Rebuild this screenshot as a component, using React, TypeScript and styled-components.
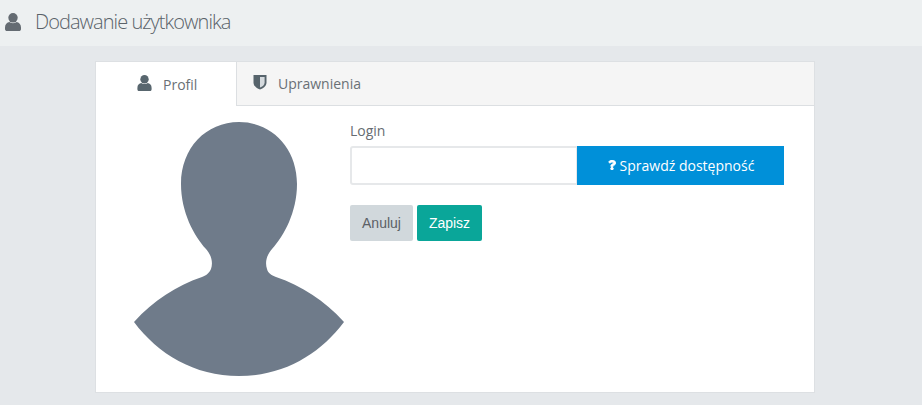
import styled, { createGlobalStyle } from 'styled-components';
import { FaQuestion } from 'react-icons/fa';

const GlobalStyle = createGlobalStyle`
  html, body {
    margin: 0;
    padding: 0;
    background: #e5e8eb;
    font-family: 'Open Sans', 'Liberation Sans', sans-serif;
  }
`;

const Page = styled.div`
  width: 922px;
  height: 405px;
  overflow: hidden;
`;

const Header = styled.header`
  height: 46px;
  background: #edf0f1;
  display: flex;
  align-items: center;
  padding-left: 5px;
  gap: 14px;
`;

const HeaderIcon = styled.svg`
  width: 16px;
  height: 18px;
  fill: #646b72;
  margin-bottom: 2px;
`;

const Title = styled.h1`
  margin: 0 0 3px;
  font-size: 20px;
  font-weight: 300;
  letter-spacing: -0.95px;
  color: #5a6269;
`;

const Card = styled.section`
  width: 720px;
  height: 332px;
  box-sizing: border-box;
  margin: 15px 0 0 95px;
  background: #fff;
  border: 1px solid #dde0e3;
  display: flex;
  flex-direction: column;
`;

const Tabs = styled.nav`
  height: 43px;
  flex: none;
  display: flex;
  background: #f5f5f5;
  border-bottom: 1px solid #dcdfe2;
`;

const Tab = styled.div<{ $active?: boolean }>`
  display: flex;
  align-items: center;
  box-sizing: border-box;
  height: ${(p) => (p.$active ? '44px' : '43px')};
  width: ${(p) => (p.$active ? '141px' : 'auto')};
  padding-left: ${(p) => (p.$active ? '41px' : '16px')};
  gap: 11px;
  font-size: 14px;
  color: #6a7075;
  background: ${(p) => (p.$active ? '#fff' : 'transparent')};
  border-right: ${(p) => (p.$active ? '1px solid #dcdfe2' : 'none')};
`;

const TabIcon = styled.span`
  display: flex;
  margin-top: -3px;
`;

const TabUser = styled.svg`
  width: 15px;
  height: 16px;
  fill: #58666e;
`;

const Body = styled.div`
  flex: 1;
  display: flex;
  padding: 16px 30px 0 38px;
`;

const Avatar = styled.svg`
  width: 210px;
  height: 254px;
  flex: none;
  fill: #6f7b8a;
`;

const Form = styled.form`
  flex: 1;
  margin-left: 6px;
`;

const Label = styled.label`
  display: block;
  font-size: 14px;
  line-height: 18px;
  color: #666c72;
`;

const InputRow = styled.div`
  display: flex;
  margin-top: 6px;
  height: 39px;
`;

const Input = styled.input`
  width: 227px;
  box-sizing: border-box;
  border: 2px solid #e6e8ea;
  border-right-width: 1px;
  border-radius: 3px 0 0 3px;
  background: #fff;
  outline: none;
`;

const CheckButton = styled.button`
  flex: 1;
  border: none;
  background: #0090d9;
  color: #fff;
  font-family: 'Open Sans', sans-serif;
  font-size: 14px;
  display: flex;
  align-items: center;
  justify-content: center;
  gap: 3px;
  padding: 0 0 1px;
`;

const QuestionIcon = styled(FaQuestion)`
  stroke: currentColor;
  stroke-width: 40px;
`;

const Actions = styled.div`
  display: flex;
  gap: 4px;
  margin-top: 20px;
`;

const ActionButton = styled.button<{ $primary?: boolean }>`
  height: 36px;
  width: ${(p) => (p.$primary ? '65px' : '63px')};
  border: none;
  border-radius: 2px;
  padding: 0;
  font-family: 'Liberation Sans', Arial, sans-serif;
  font-size: 14px;
  color: ${(p) => (p.$primary ? '#fff' : '#5b6066')};
  background: ${(p) => (p.$primary ? '#0aa699' : '#d1d8dc')};
`;

const USER_PATH =
  'M0 14.500C0 11 2 9.500 4.500 9C6 10.500 10 10.500 11.500 9C14 9.500 16 11 16 14.500V16C16 17.500 15 18 14 18H2C1 18 0 17.500 0 16Z';

function UserShape() {
  return (
    <>
      <ellipse cx="8" cy="4.800" rx="4.700" ry="4.800" />
      <path d={USER_PATH} />
    </>
  );
}

function ShieldIcon() {
  return (
    <svg width="14" height="16" viewBox="0 0 14 16">
      <path d="M0.500 1h13v7.500c0 3.600-3.400 5.900-6.500 7C3.900 14.400.5 12.100.5 8.500z" fill="#57646c" />
      <path d="M7 3h4.600v5.500c0 2.500-2.300 4.200-4.600 5.100z" fill="#d5dade" />
    </svg>
  );
}

export default function App() {
  return (
    <Page>
      <GlobalStyle />
      <Header>
        <HeaderIcon viewBox="0 0 16 18">
          <UserShape />
        </HeaderIcon>
        <Title>Dodawanie użytkownika</Title>
      </Header>
      <Card>
        <Tabs>
          <Tab $active>
            <TabIcon>
              <TabUser viewBox="0 0 16 18">
                <UserShape />
              </TabUser>
            </TabIcon>
            Profil
          </Tab>
          <Tab>
            <TabIcon>
              <ShieldIcon />
            </TabIcon>
            Uprawnienia
          </Tab>
        </Tabs>
        <Body>
          <Avatar viewBox="0 0 210 254">
            <path d="M105 0C72 0 47 26 47 62C47 90 60 114 72 127C78 134 79 141 77 147C75 151 73 153 68 155C42 164 20 178 0 200C24 232 60 254 105 254C150 254 186 232 210 200C190 178 168 164 142 155C137 153 134 151 133 147C131 141 132 134 138 127C150 114 163 90 163 62C163 26 138 0 105 0Z" />
          </Avatar>
          <Form>
            <Label>Login</Label>
            <InputRow>
              <Input />
              <CheckButton type="button">
                <QuestionIcon size={10} />
                Sprawdź dostępność
              </CheckButton>
            </InputRow>
            <Actions>
              <ActionButton type="button">Anuluj</ActionButton>
              <ActionButton type="button" $primary>
                Zapisz
              </ActionButton>
            </Actions>
          </Form>
        </Body>
      </Card>
    </Page>
  );
}
